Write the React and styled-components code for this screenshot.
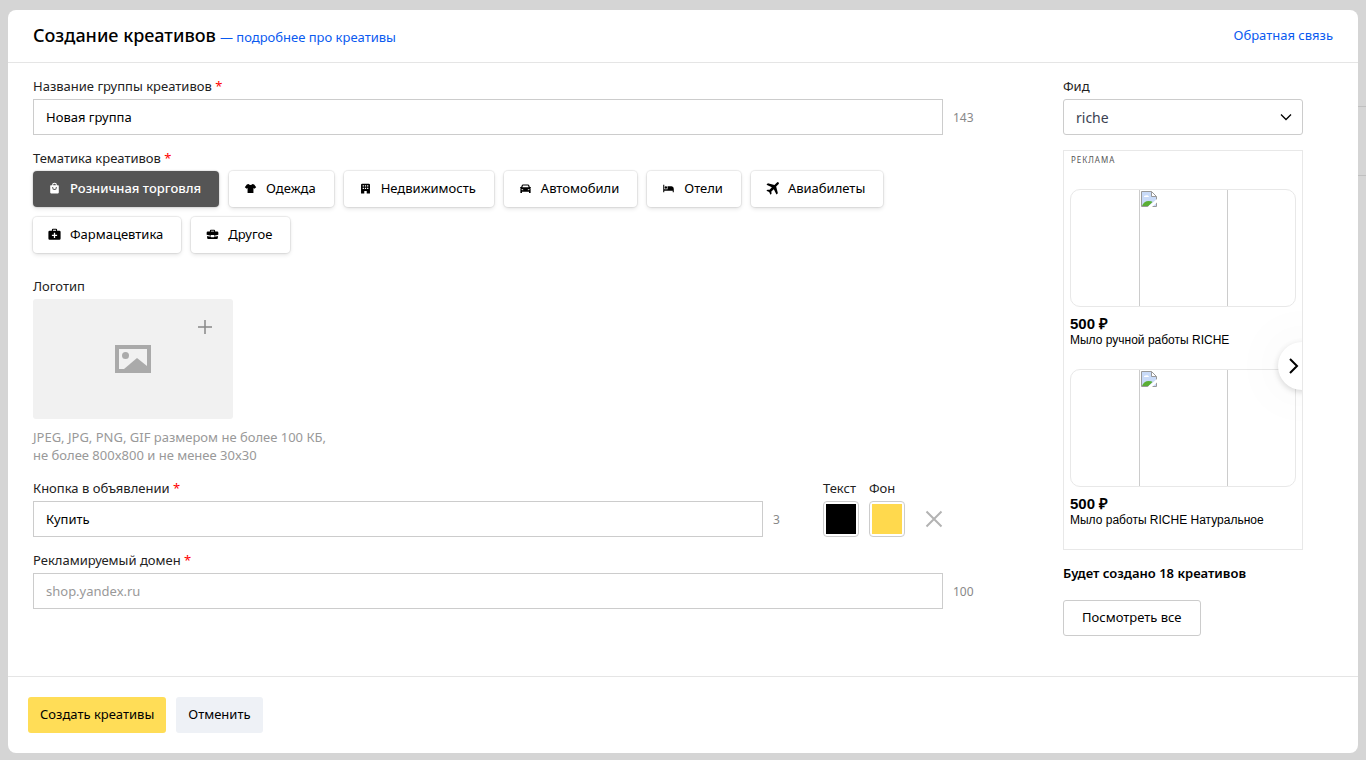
import React, { useState } from "react";
import styled, { createGlobalStyle } from "styled-components";

const GlobalStyle = createGlobalStyle`
*{
box-sizing:border-box;
}
body{
margin:0;
background:#d5d5d5;
color:#000;
font-family:"Noto Sans","Open Sans",sans-serif;
font-size:13px;
line-height:18px;
}
button,input,select{
font-family:inherit;
font-size:inherit;
color:inherit;
}
`;

const Page = styled.div`
position:relative;
display:flex;
min-height:100vh;
padding:10px 8px 7px;
`;
const Behind = styled.div`
position:absolute;
top:106px;
right:0;
width:8px;
height:70px;
border-top:1px solid #c0c0c0;
border-bottom:1px solid #c0c0c0;
`;
const Modal = styled.main`
flex:1;
display:flex;
flex-direction:column;
min-width:0;
background:#fff;
border-radius:8px;
`;
const Header = styled.header`
display:flex;
align-items:center;
justify-content:space-between;
height:53px;
padding:0 25px 2px;
border-bottom:1px solid #e5e5e5;
`;
const Heading = styled.div`
display:flex;
align-items:baseline;
gap:4px;
`;
const Title = styled.h1`
margin:0;
font-size:18px;
line-height:24px;
font-weight:500;
`;
const Link = styled.a`
color:#0a5af0;
text-decoration:none;
`;
const Content = styled.div`
flex:1;
display:flex;
padding:15px 55px 25px 25px;
`;
const Form = styled.form`
flex:1;
min-width:0;
display:flex;
flex-direction:column;
gap:15px;
`;
const Field = styled.div`
display:flex;
flex-direction:column;
align-items:flex-start;
`;
const Label = styled.label`
display:block;
height:21px;
line-height:17px;
color:#222;
white-space:nowrap;
`;
const Star = styled.span`
color:#f00;
`;
const InputRow = styled.div`
display:grid;
grid-template-columns:minmax(0,1fr) ${props => props.$counter};
align-items:center;
width:100%;
`;
const TextInput = styled.input`
width:100%;
height:36px;
padding:0 12px;
border:1px solid #ccc;
border-radius:0;
background:#fff;
outline:none;
&::placeholder{
    color:#999;
    opacity:1;
}
`;
const Counter = styled.span`
padding:2px 0 0 10px;
font-size:12px;
color:#888;
`;
const Topics = styled.div`
display:flex;
flex-wrap:wrap;
gap:10px;
max-width:900px;
margin-bottom:10px;
`;
const Topic = styled.button`
display:flex;
align-items:center;
gap:9px;
height:36px;
padding:0 18px 2px 15px;
border:none;
border-radius:4px;
white-space:nowrap;
font-weight:${props => (props.$active ? 500 : 400)};
background:${props => (props.$active ? "#555" : "#fff")};
color:${props => (props.$active ? "#fff" : "#000")};
box-shadow:0 0 1px 1px rgba(0,0,0,.08),0 2px 4px rgba(0,0,0,.1);
svg{
    width:13px;
    height:13px;
    fill:currentColor;
}
`;
const Upload = styled.label`
position:relative;
display:flex;
align-items:center;
justify-content:center;
width:200px;
height:120px;
border-radius:3px;
background:#f1f1f1;
cursor:pointer;
`;
const FileInput = styled.input`
position:absolute;
width:1px;
height:1px;
opacity:0;
`;
const PlusIcon = styled.svg`
position:absolute;
top:20px;
right:20px;
`;
const Hint = styled.p`
margin:9px 0 1px;
color:#999;
`;
const ButtonRow = styled.div`
display:flex;
align-items:flex-end;
`;
const GrowField = styled(Field)`
flex:1;
min-width:0;
`;
const Colors = styled.div`
display:flex;
align-items:flex-end;
gap:10px;
margin-right:120px;
`;
const ColorField = styled(Field)`
width:36px;
`;
const Swatch = styled.input`
width:36px;
height:36px;
padding:2px;
border:1px solid #ccc;
border-radius:4px;
background:#fff;
&::-webkit-color-swatch-wrapper{
    padding:0;
}
&::-webkit-color-swatch{
    border:none;
}
`;
const Remove = styled.button`
display:flex;
align-items:center;
justify-content:flex-end;
width:28px;
height:36px;
padding:0;
border:none;
background:none;
`;
const Aside = styled.aside`
flex:none;
width:240px;
`;
const SelectBox = styled.div`
position:relative;
svg{
    position:absolute;
    top:12px;
    right:11px;
    pointer-events:none;
}
`;
const Select = styled.select`
appearance:none;
width:100%;
height:36px;
padding:0 32px 0 12px;
border:1px solid #ccc;
border-radius:3px;
background:#fff;
font-size:14px;
color:#3b3f51;
`;
const Preview = styled.section`
position:relative;
overflow:hidden;
height:400px;
margin-top:15px;
padding:4px 6px;
border:1px solid #e8e8e8;
font-family:"Liberation Sans",Arial,sans-serif;
`;
const AdMark = styled.div`
height:34px;
padding-left:1px;
font-family:"Noto Sans",sans-serif;
font-size:8px;
line-height:10px;
letter-spacing:1px;
color:#555;
`;
const Product = styled.article`
height:180px;
`;
const Frame = styled.div`
display:flex;
justify-content:center;
height:118px;
border:1px solid #e8e8e8;
border-radius:10px;
`;
const Missing = styled.div`
width:89px;
padding:1px;
border:solid #ccc;
border-width:0 1px;
`;
const Price = styled.div`
margin-top:9px;
font-size:15px;
line-height:16px;
font-weight:700;
`;
const Name = styled.div`
font-size:12px;
line-height:16px;
white-space:nowrap;
`;
const Next = styled.button`
position:absolute;
top:191px;
right:-24px;
display:flex;
align-items:center;
width:48px;
height:48px;
padding:0 0 0 8px;
border:none;
border-radius:50%;
background:#fff;
box-shadow:0 0 60px rgba(0,0,0,.06),0 2px 6px rgba(0,0,0,.15);
`;
const Total = styled.p`
margin:14px 0 18px;
font-weight:600;
`;
const OutlineButton = styled.button`
height:36px;
padding:0 18px 2px;
border:1px solid #ccc;
border-radius:3px;
background:#fff;
`;
const Footer = styled.footer`
display:flex;
gap:10px;
padding:20px;
border-top:1px solid #e5e5e5;
`;
const FooterButton = styled.button`
height:36px;
padding:0 12px 2px;
border:none;
border-radius:3px;
background:${props => (props.$primary ? "#ffdd57" : "#eef1f6")};
`;

const topics = [
  {
    name: "Розничная торговля",
    icon: <path fillRule="evenodd" d="M5 4a3 3 0 0 1 6 0h1.500q.8 0 .8.800V13q0 1-1 1H3.700q-1 0-1-1V4.800q0-.8.800-.8zM6.300 4h3.400a1.700 1.700 0 0 0-3.400 0zM5.200 6v1a2.800 2.800 0 0 0 5.600 0V6H9.600v1a1.600 1.600 0 0 1-3.200 0V6z" />
  },
  {
    name: "Одежда",
    icon: <path d="M5.500 2.500Q8 5 10.500 2.500L12.500 3 15 6.500 12.700 8.300 11.600 7.300V13.500H4.400V7.300L3.300 8.300 1 6.500 3.500 3z" />
  },
  {
    name: "Недвижимость",
    icon: <path fillRule="evenodd" d="M4 2h8q1.500 0 1.500 1.500V14H9.500v-3h-3v3h-4V3.500Q2.500 2 4 2zM4.500 4v1.600h1.600V4zM7.200 4v1.600h1.600V4zM9.900 4v1.600h1.600V4zM4.500 7v1.600h1.600V7zM7.200 7v1.600h1.600V7zM9.900 7v1.600h1.600V7z" />
  },
  {
    name: "Автомобили",
    icon: <path fillRule="evenodd" d="M4.800 3h6.400q.8 0 1.200.8l.9 2.400h1.200v1.100h-.6q.4.500.4 1.300v4.900h-2v-1.400H3.700v1.400h-2V8.600q0-.8.400-1.300h-.6V6.200h1.200l.9-2.400q.4-.8 1.200-.8zM4.900 4.400l-.8 2.200h7.800l-.8-2.200zM3.300 8.500v1.300l1.900.5V9.100zM12.700 8.500v1.300l-1.900.5V9.100z" />
  },
  {
    name: "Отели",
    icon: <path d="M1.500 3.500h1.300v5.300h4V5.300h4.900q2.800.2 2.800 2.900v4.300h-1.300v-1.800H2.800v1.800H1.500zM4.800 5.200a1.500 1.500 0 1 1 0 3 1.500 1.500 0 0 1 0-3z" />
  },
  {
    name: "Авиабилеты",
    icon: <path d="M15.500.5q1 1-.2 2.300L12.500 5.600l2.100 8.100-1.700 1.700-3.300-6.400-3 2.800.2 2.600-1.300 1.300-1.600-3.300L.5 10.700l1.300-1.300 2.600.2 2.800-3L.6 3.300 2.300 1.600l8.100 2L13.200.8q1.300-1.300 2.300-.3z" />
  },
  {
    name: "Фармацевтика",
    icon: <path fillRule="evenodd" d="M4.800 3.500V2.300Q4.800 1 6.100 1h3.800q1.300 0 1.300 1.300v1.200h2.800q1.500 0 1.500 1.500v8q0 1.500-1.500 1.500H2Q.5 14.500.5 13V5q0-1.500 1.500-1.500zM6.100 3.500h3.800V2.300H6.100zM7.200 5.800v2.400H4.800v1.600h2.400v2.400h1.600V9.800h2.400V8.200H8.800V5.800z" />
  },
  {
    name: "Другое",
    icon: <path fillRule="evenodd" d="M4.800 4.300v-.8Q4.800 2.300 6 2.300h4q1.200 0 1.200 1.200v.8h2.600q1.400 0 1.400 1.400v2.700q-3 .9-5.300 1V8.600H6.100v.8q-2.300-.1-5.300-1V5.700q0-1.400 1.400-1.400zM6.100 4.300h3.800v-.8H6.100zM1.400 9.800q2.200.7 4.700.8v.8h3.800v-.8q2.500-.1 4.700-.8v2.400q0 1.400-1.400 1.400H2.800q-1.400 0-1.400-1.400z" />
  }
];

const products = ["Мыло ручной работы RICHE", "Мыло работы RICHE Натуральное"];

const BrokenImage = () => (
  <svg width="16" height="16" viewBox="0 0 16 16">
    <path d="M1 1h9l5 4v10H1z" fill="#c8daf8" />
    <path d="M3 6a1.500 1.500 0 0 1 2-1.500A2 2 0 0 1 8 6z" fill="#fff" />
    <path d="M1 15q2-5 6.500-5 3.500 0 4 1l-4 4z" fill="#5aae35" />
    <path d="M11 1l4 4h-4z" fill="#fff" />
    <path d="M.5.500h10l5 5v10H.5zM10.500.5v5h5" fill="none" stroke="#999" />
    <path d="M6.500 16L16 8v3.500L11 16z" fill="#fff" />
  </svg>
);

const Required = () => <Star>*</Star>;

const App = () => {
  const [topic, setTopic] = useState(topics[0].name);
  const [group, setGroup] = useState("Новая группа");
  const [buttonText, setButtonText] = useState("Купить");
  const [domain, setDomain] = useState("");
  const [textColor, setTextColor] = useState("#000000");
  const [backColor, setBackColor] = useState("#ffd94d");

  return (
    <Page>
      <GlobalStyle />
      <Behind />
      <Modal>
        <Header>
          <Heading>
            <Title>Создание креативов</Title>
            <Link href="#about">— подробнее про креативы</Link>
          </Heading>
          <Link href="#feedback">Обратная связь</Link>
        </Header>
        <Content>
          <Form id="creative" onSubmit={e => e.preventDefault()}>
            <Field>
              <Label htmlFor="group">Название группы креативов <Required /></Label>
              <InputRow $counter="120px">
                <TextInput id="group" value={group} onChange={e => setGroup(e.target.value)} />
                <Counter>{155 - group.length}</Counter>
              </InputRow>
            </Field>
            <Field>
              <Label as="span" id="topic">Тематика креативов <Required /></Label>
              <Topics role="group" aria-labelledby="topic">
                {topics.map(item => (
                  <Topic
                    key={item.name}
                    type="button"
                    aria-pressed={item.name === topic}
                    $active={item.name === topic}
                    onClick={() => setTopic(item.name)}
                  >
                    <svg viewBox="0 0 16 16">{item.icon}</svg>
                    {item.name}
                  </Topic>
                ))}
              </Topics>
            </Field>
            <Field>
              <Label htmlFor="logo">Логотип</Label>
              <Upload>
                <FileInput id="logo" type="file" accept="image/*" />
                <svg width="36" height="28" viewBox="0 0 36 28">
                  <path d="M2 2h32v24H2z" fill="none" stroke="#aaa" strokeWidth="4" />
                  <circle cx="10.500" cy="10.500" r="3.500" fill="#aaa" />
                  <path d="M9 24 22 13l10 8v3z" fill="#aaa" />
                </svg>
                <PlusIcon width="16" height="16" viewBox="0 0 16 16">
                  <path d="M8 1v14M1 8h14" stroke="#888" strokeWidth="1.500" />
                </PlusIcon>
              </Upload>
              <Hint>
                JPEG, JPG, PNG, GIF размером не более 100 КБ,<br />
                не более 800x800 и не менее 30x30
              </Hint>
            </Field>
            <ButtonRow>
              <GrowField>
                <Label htmlFor="button">Кнопка в объявлении <Required /></Label>
                <InputRow $counter="60px">
                  <TextInput id="button" value={buttonText} onChange={e => setButtonText(e.target.value)} />
                  <Counter>{9 - buttonText.length}</Counter>
                </InputRow>
              </GrowField>
              <Colors>
                <ColorField>
                  <Label htmlFor="text-color">Текст</Label>
                  <Swatch id="text-color" type="color" value={textColor} onChange={e => setTextColor(e.target.value)} />
                </ColorField>
                <ColorField>
                  <Label htmlFor="back-color">Фон</Label>
                  <Swatch id="back-color" type="color" value={backColor} onChange={e => setBackColor(e.target.value)} />
                </ColorField>
                <Remove type="button" aria-label="Удалить кнопку">
                  <svg width="18" height="18" viewBox="0 0 18 18">
                    <path d="M1.500 1.500l15 15M16.500 1.500l-15 15" stroke="#b3b3b3" strokeWidth="2" />
                  </svg>
                </Remove>
              </Colors>
            </ButtonRow>
            <Field>
              <Label htmlFor="domain">Рекламируемый домен <Required /></Label>
              <InputRow $counter="120px">
                <TextInput id="domain" placeholder="shop.yandex.ru" value={domain} onChange={e => setDomain(e.target.value)} />
                <Counter>{100 - domain.length}</Counter>
              </InputRow>
            </Field>
          </Form>
          <Aside>
            <Label htmlFor="feed">Фид</Label>
            <SelectBox>
              <Select id="feed">
                <option>riche</option>
              </Select>
              <svg width="12" height="12" viewBox="0 0 12 12">
                <path d="M1 3.500l5 5 5-5" fill="none" stroke="#000" strokeWidth="1.300" />
              </svg>
            </SelectBox>
            <Preview>
              <AdMark>РЕКЛАМА</AdMark>
              {products.map(name => (
                <Product key={name}>
                  <Frame>
                    <Missing><BrokenImage /></Missing>
                  </Frame>
                  <Price>500 ₽</Price>
                  <Name>{name}</Name>
                </Product>
              ))}
              <Next type="button" aria-label="Дальше">
                <svg width="16" height="18" viewBox="0 0 16 18">
                  <path d="M4 2l7 7-7 7" fill="none" stroke="#000" strokeWidth="2" />
                </svg>
              </Next>
            </Preview>
            <Total>Будет создано 18 креативов</Total>
            <OutlineButton type="button">Посмотреть все</OutlineButton>
          </Aside>
        </Content>
        <Footer>
          <FooterButton type="submit" form="creative" $primary>Создать креативы</FooterButton>
          <FooterButton type="button">Отменить</FooterButton>
        </Footer>
      </Modal>
    </Page>
  );
};

export default App;
